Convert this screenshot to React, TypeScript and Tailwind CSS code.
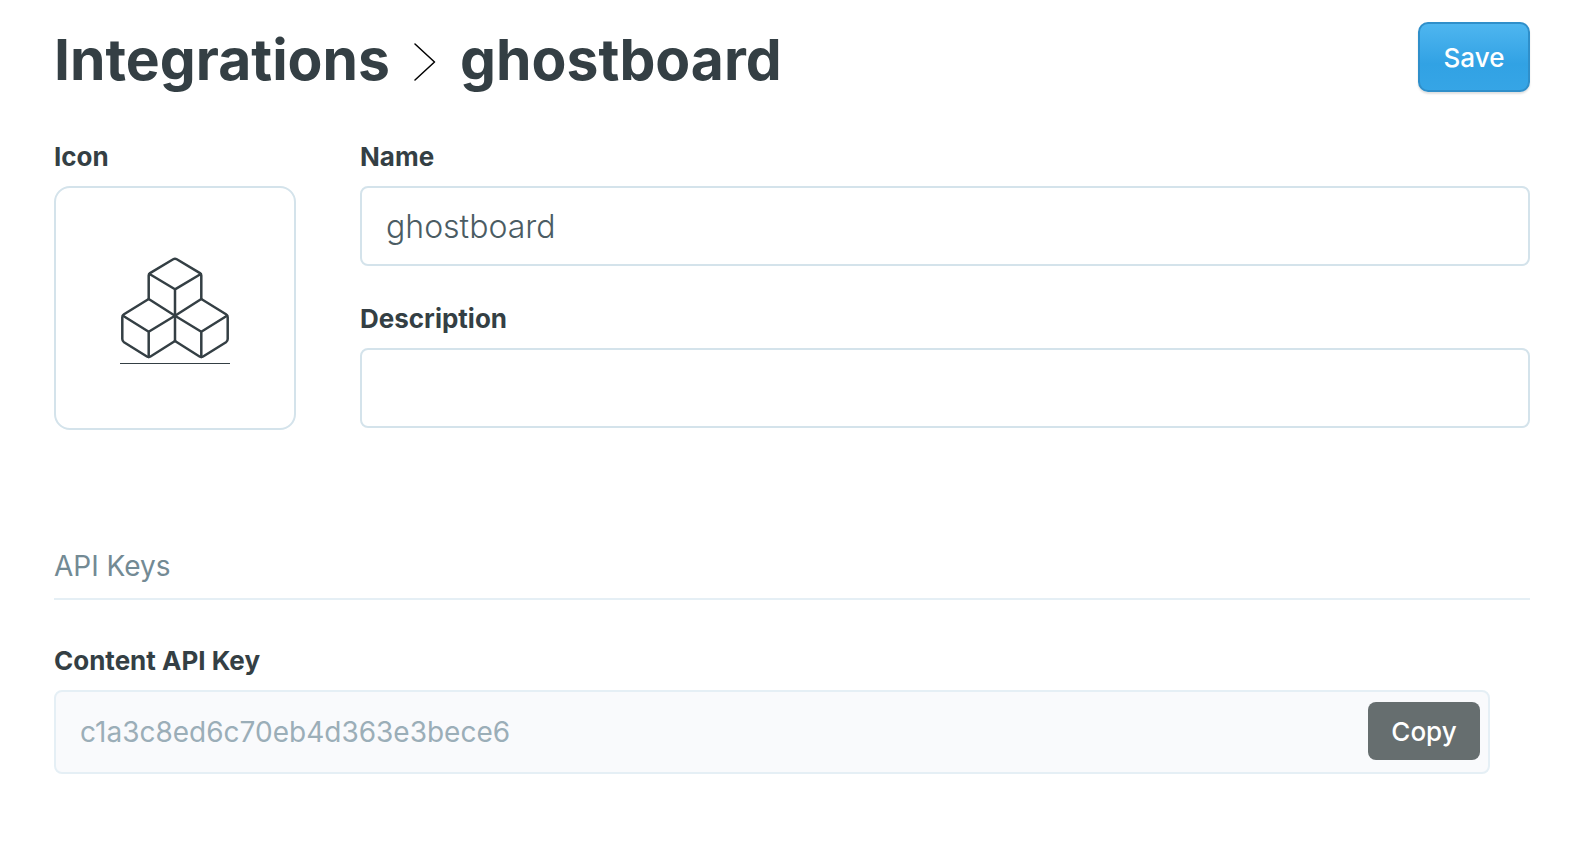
import React, { useState } from "react";

const API_KEY = "c1a3c8ed6c70eb4d363e3bece6";

const labelClass =
  "block w-fit mb-3 text-[26px] leading-[34px] font-bold text-[#343f44]";

const inputClass =
  "block w-full h-20 px-6 rounded-lg border-2 border-[#d4e3eb] bg-white text-[32px] font-light text-[#4b5c63] outline-none focus:border-[#3eb0ef]";

const CubesIcon: React.FC = () => (
  <svg
    viewBox="0 -5 110 112"
    className="w-[110px] h-28"
    fill="none"
    stroke="#343f44"
    strokeWidth="2.5"
    strokeLinecap="round"
    strokeLinejoin="round"
    aria-hidden="true"
  >
    {/* Top cube */}
    <path d="M28.7 42V18.5Q28.7 17 30 16.1L53.2 2.3Q55 1.2 56.8 2.3L80 16.1Q81.3 17 81.3 18.5V42" />
    <path d="M29.5 17L55 32.3L80.8 17M55 32.3V84" />
    {/* Left cube */}
    <path d="M55 58.7L28.7 42L4 57.2Q2.3 58.4 2.3 60.3V82Q2.3 84 4 85.2L26.9 99.5Q28.7 100.6 30.5 99.5L55 84" />
    <path d="M3 58.7L28.7 74.7L55 58.7M28.7 74.7V100" />
    {/* Right cube */}
    <path d="M55 58.7L81.3 42L106 57.2Q107.7 58.4 107.7 60.3V82Q107.7 84 106 85.2L83.1 99.5Q81.3 100.6 79.5 99.5L55 84" />
    <path d="M107 58.7L81.3 74.7L55 58.7M81.3 74.7V100" />
    {/* Ground line */}
    <path d="M0 106.5H110" strokeWidth="1" strokeLinecap="butt" />
  </svg>
);

const Header: React.FC = () => (
  <header className="flex items-start justify-between">
    <h1 className="flex items-center text-[57px] leading-[76px] font-bold text-[#343f44]">
      <a href="#integrations">Integrations</a>
      <svg
        viewBox="0 0 22 38"
        className="w-[22px] h-[38px] mt-1 mx-6"
        fill="none"
        stroke="#000"
        strokeWidth="1.5"
        strokeLinecap="round"
        strokeLinejoin="round"
        aria-hidden="true"
      >
        <path d="M1 1L20.5 19L1 37" />
      </svg>
      <span>ghostboard</span>
    </h1>
    <button
      type="submit"
      className="w-28 h-[70px] rounded-[10px] border-2 border-[#2f8fca] bg-linear-to-b from-[#4fb7f0] via-[#31a2e4] via-60% to-[#36a5e6] bg-origin-border text-[26px] font-medium text-white shadow-[0_2px_2px_rgba(0,0,0,0.12)]"
    >
      Save
    </button>
  </header>
);

const App: React.FC = () => {
  const [name, setName] = useState("ghostboard");
  const [description, setDescription] = useState("");

  const copyKey = () => navigator.clipboard?.writeText(API_KEY);

  return (
    <form
      className="px-[54px] pt-[22px] pb-20 bg-white font-['Inter',sans-serif]"
      onSubmit={(e) => e.preventDefault()}
    >
      <Header />

      <section className="flex gap-16 mt-[42px]">
        <div className="shrink-0">
          <label htmlFor="icon" className={labelClass}>
            Icon
          </label>
          <button
            id="icon"
            type="button"
            className="flex items-center justify-center w-[242px] h-[244px] rounded-2xl border-2 border-[#d4e3eb]"
          >
            <CubesIcon />
          </button>
        </div>

        <div className="flex-1 min-w-0">
          <label htmlFor="name" className={labelClass}>
            Name
          </label>
          <input
            id="name"
            type="text"
            className={inputClass}
            value={name}
            onChange={(e) => setName(e.target.value)}
          />
          <label htmlFor="description" className={`${labelClass} mt-9`}>
            Description
          </label>
          <input
            id="description"
            type="text"
            className={inputClass}
            value={description}
            onChange={(e) => setDescription(e.target.value)}
          />
        </div>
      </section>

      <section className="mt-[118px]">
        <h2 className="pb-3.5 border-b-2 border-[#e5eff5] text-[28px] leading-9 font-normal text-[#738a94]">
          API Keys
        </h2>

        <div className="mt-11 mr-10">
          <label htmlFor="content-key" className={labelClass}>
            Content API Key
          </label>
          {/* Read-only key with copy action */}
          <div className="flex items-start h-[84px] pt-2.5 pl-6 pr-2 rounded-lg border-2 border-[#e5eff5] bg-[#f9fafc]">
            <input
              id="content-key"
              type="text"
              readOnly
              value={API_KEY}
              className="flex-1 min-w-0 h-[60px] bg-transparent text-[28px] text-[#9baeb8] outline-none"
            />
            <button
              type="button"
              onClick={copyKey}
              className="w-28 h-[58px] rounded-lg bg-[#666e6f] text-[26px] font-medium text-white"
            >
              Copy
            </button>
          </div>
        </div>
      </section>
    </form>
  );
};

export default App;
